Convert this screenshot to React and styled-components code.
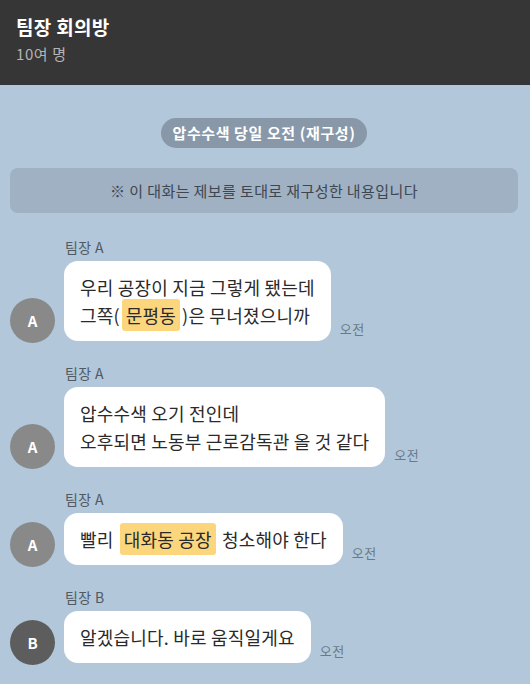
import React from 'react';
import styled, { createGlobalStyle } from 'styled-components';

const GlobalStyle = createGlobalStyle`
  html, body {
    margin: 0;
    padding: 0;
    background: #b2c7da;
  }
  body {
    font-family: "Noto Sans CJK KR", "Noto Sans", sans-serif;
  }
`;

const Screen = styled.div`
  width: 530px;
  height: 684px;
  overflow: hidden;
  background: #b2c7da;
  display: flex;
  flex-direction: column;
`;

const Header = styled.header`
  height: 85px;
  box-sizing: border-box;
  background: #363636;
  padding: 13px 16px 0;
  display: flex;
  flex-direction: column;
  gap: 3px;
`;

const Title = styled.h1`
  margin: 0;
  font-size: 19px;
  font-weight: 700;
  line-height: 28px;
  letter-spacing: 0.3px;
  color: #ffffff;
`;

const Members = styled.div`
  font-size: 15px;
  line-height: 20px;
  letter-spacing: 0.6px;
  color: #b4b4b4;
`;

const Body = styled.main`
  display: flex;
  flex-direction: column;
  padding: 33px 12px 0 10px;
`;

const DatePill = styled.div`
  align-self: center;
  background: #8898a9;
  color: #ffffff;
  font-size: 15px;
  font-weight: 700;
  line-height: 30px;
  letter-spacing: 0.6px;
  padding: 0 12px;
  border-radius: 15px;
`;

const Notice = styled.div`
  margin-top: 20px;
  background: #9fb1c3;
  border-radius: 8px;
  height: 45px;
  display: flex;
  align-items: center;
  justify-content: center;
  font-size: 15px;
  letter-spacing: 0.4px;
  color: #3e4650;
`;

const Thread = styled.div`
  display: flex;
  flex-direction: column;
  gap: 22px;
  margin-top: 24px;
`;

const Row = styled.div`
  display: flex;
  align-items: flex-end;
  gap: 9px;
`;

const Avatar = styled.div`
  width: 45px;
  height: 45px;
  flex: none;
  border-radius: 50%;
  background: ${(p) => (p.dark ? '#5d5d5d' : '#898989')};
  color: #ffffff;
  font-size: 15px;
  font-weight: 700;
  display: flex;
  align-items: center;
  justify-content: center;
  margin-bottom: -2px;
`;

const Column = styled.div`
  display: flex;
  flex-direction: column;
  gap: 4px;
`;

const Name = styled.div`
  font-size: 14px;
  line-height: 20px;
  letter-spacing: 0.4px;
  color: #505a64;
  padding-left: 1px;
`;

const BubbleLine = styled.div`
  display: flex;
  align-items: flex-end;
  gap: 9px;
`;

const Bubble = styled.div`
  background: #ffffff;
  border-radius: 14px;
  padding: 12px 16px;
  font-size: 18px;
  font-weight: 400;
  line-height: 28px;
  letter-spacing: 0.2px;
  color: #2a2a2a;
  white-space: pre-line;
`;

const Mark = styled.span`
  background: #fcd67c;
  border-radius: 3px;
  padding: 3px 4px;
  margin: 0 2px;
`;

const Time = styled.span`
  font-size: 13px;
  letter-spacing: 0.4px;
  color: #6c7a88;
  margin-bottom: 3px;
`;

const messages = [
  {
    name: '팀장 A',
    avatar: 'A',
    text: (
      <>
        우리 공장이 지금 그렇게 됐는데{'\n'}그쪽(<Mark>문평동</Mark>)은 무너졌으니까
      </>
    ),
  },
  {
    name: '팀장 A',
    avatar: 'A',
    text: '압수수색 오기 전인데\n오후되면 노동부 근로감독관 올 것 같다',
  },
  {
    name: '팀장 A',
    avatar: 'A',
    text: (
      <>
        빨리 <Mark>대화동 공장</Mark> 청소해야 한다
      </>
    ),
  },
  {
    name: '팀장 B',
    avatar: 'B',
    dark: true,
    text: '알겠습니다. 바로 움직일게요',
  },
];

export default function App() {
  return (
    <Screen>
      <GlobalStyle />
      <Header>
        <Title>팀장 회의방</Title>
        <Members>10여 명</Members>
      </Header>
      <Body>
        <DatePill>압수수색 당일 오전 (재구성)</DatePill>
        <Notice>※ 이 대화는 제보를 토대로 재구성한 내용입니다</Notice>
        <Thread>
          {messages.map((m, i) => (
            <Row key={i}>
              <Avatar dark={m.dark}>{m.avatar}</Avatar>
              <Column>
                <Name>{m.name}</Name>
                <BubbleLine>
                  <Bubble>{m.text}</Bubble>
                  <Time>오전</Time>
                </BubbleLine>
              </Column>
            </Row>
          ))}
        </Thread>
      </Body>
    </Screen>
  );
}
